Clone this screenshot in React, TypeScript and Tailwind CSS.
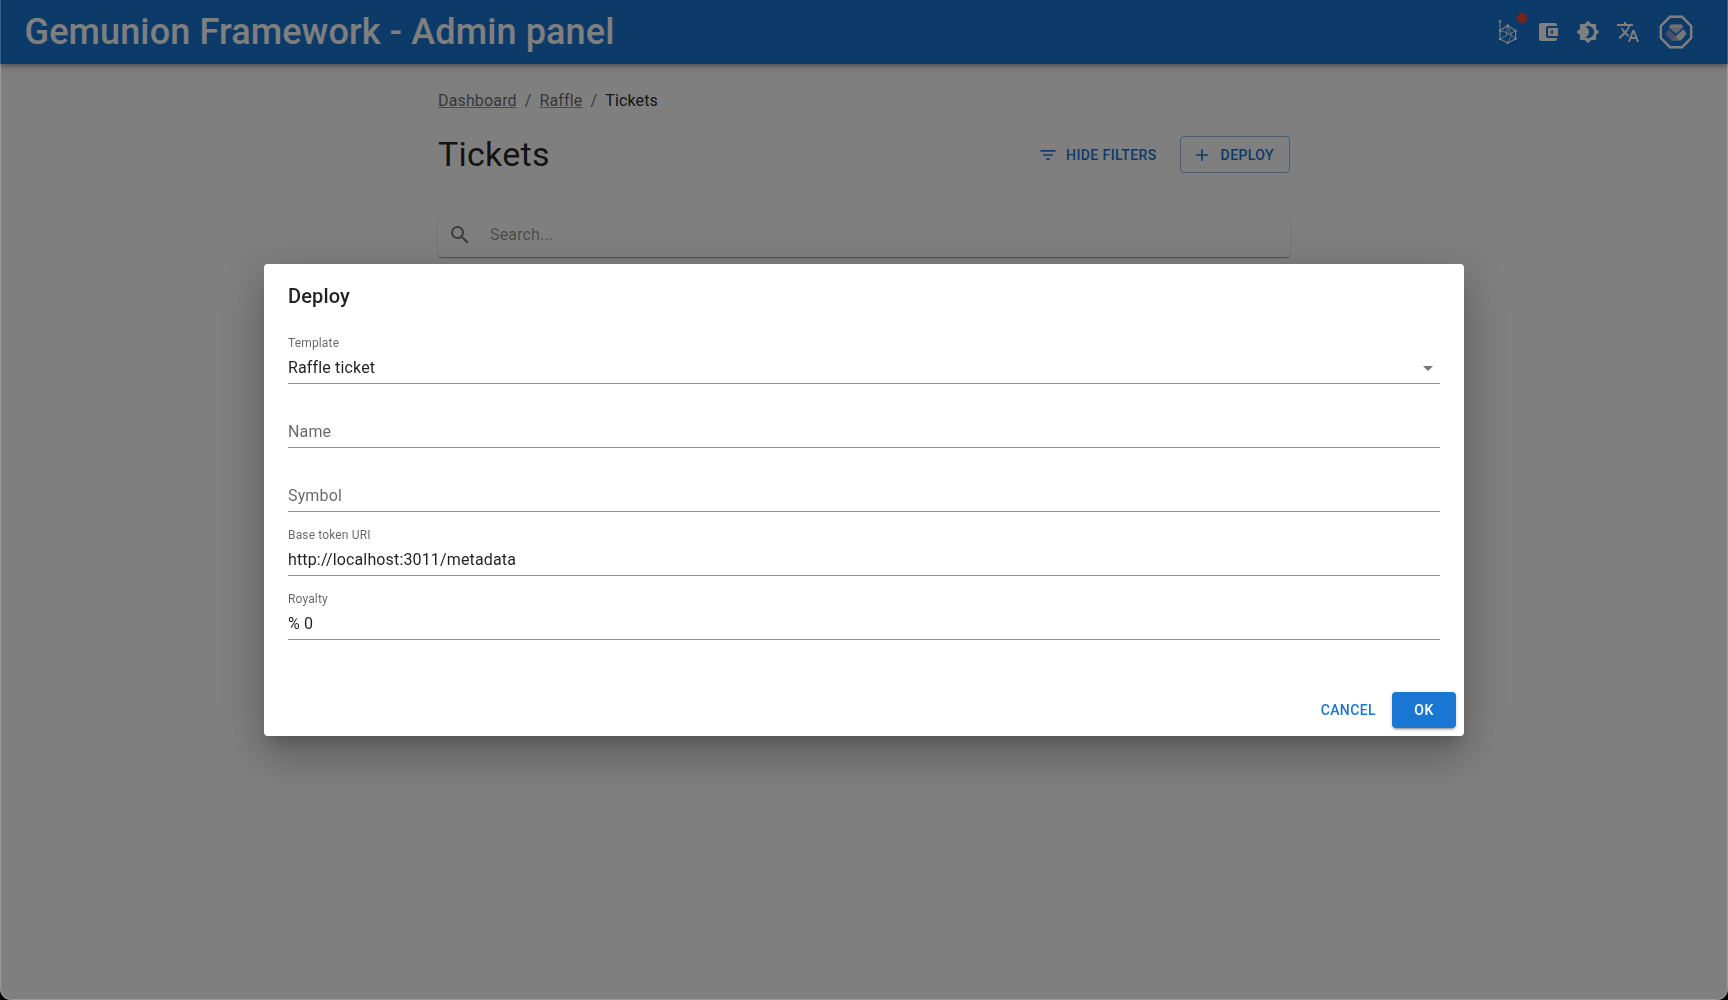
import React from "react";
import {
  MdAccountBalanceWallet,
  MdAdd,
  MdArrowDropDown,
  MdBrightness4,
  MdFilterList,
  MdSearch,
  MdTranslate,
} from "react-icons/md";

function NetworkIcon() {
  const nodes = [
    [4, 1.3],
    [4, 19],
    [4, 10.8],
    [11.7, 5.5],
    [19.6, 10.8],
    [19.6, 18.8],
    [11.7, 23],
  ];
  return (
    <svg width="24" height="24" viewBox="0 0 24 24" fill="none" stroke="currentColor" strokeWidth="1.1">
      <path d="M4 1.3V19l7.7 4 7.9-4.2v-8l-7.9-5.3L4 10.8" />
      <path d="M4 10.8l8.5 2.2 7.1 5.8M11.7 5.5l-1.4 10.2M4 19l6.3-3.3 9.3-4.9M11.7 5.5l3.8 9.6-3.8 7.9" strokeWidth=".8" />
      {nodes.map(([x, y]) => (
        <circle key={`${x}-${y}`} cx={x} cy={y} r="1.2" fill="currentColor" stroke="none" />
      ))}
    </svg>
  );
}

function GemLogo() {
  return (
    <svg width="34" height="34" viewBox="0 0 34 34">
      <path d="M11 1.8h12L32.2 11v12L23 32.2H11L1.8 23V11z" fill="none" stroke="#fff" strokeWidth="2.4" />
      <path d="M6.3 19l3.2-4.8L17 21v4.6h-5z" fill="#8d9fcf" />
      <path d="M27.6 18.8l-3.2-4.6L17 21l-2 1.9 2 2.7h5z" fill="#eeeeec" />
      <path d="M12 25.6l5-4.6 3 4.6z" fill="#b0bbdc" />
      <path d="M11.7 9.3h11l1.8 3.3L17 19.2l-7.5-6.6z" fill="#c3cdea" stroke="#1976d2" strokeWidth=".8" />
      <path d="M11.9 9.5h10.6l1.5 2.8H10.2z" fill="#e2e4ec" />
    </svg>
  );
}

function Header() {
  return (
    <header className="flex h-16 items-center justify-between bg-[#1976d2] px-6 text-white shadow-[0_2px_4px_-1px_rgba(0,0,0,0.2),0_4px_5px_rgba(0,0,0,0.14),0_1px_10px_rgba(0,0,0,0.12)]">
      <div className="pl-[0.5px] text-[36px] leading-[54px] font-medium tracking-[0.0035em]">Gemunion Framework - Admin panel</div>
      <div className="flex items-center">
        <button className="relative p-2">
          <NetworkIcon />
          <span className="absolute top-[1px] right-[1px] size-2.5 rounded-full bg-[#f44336]" />
        </button>
        <button className="p-2"><MdAccountBalanceWallet size={24} /></button>
        <button className="p-2"><MdBrightness4 size={24} /></button>
        <button className="p-2"><MdTranslate size={24} /></button>
        <button className="flex w-14 justify-center"><GemLogo /></button>
      </div>
    </header>
  );
}

function Field({ label, value, prefix, select }: { label: string; value?: string; prefix?: string; select?: boolean }) {
  return (
    <div className="mb-4 flex h-12 flex-col border-b border-[#949494] tracking-[0.00938em]">
      {value ? (
        <>
          <span className="h-[17px] text-xs leading-[15px] text-black/60">{label}</span>
          <div className="flex h-[30px] items-center justify-between">
            <span>{prefix}{value}</span>
            {select && <MdArrowDropDown size={24} className="text-black/54" />}
          </div>
        </>
      ) : (
        <span className="pt-5 leading-6 text-black/60">{label}</span>
      )}
    </div>
  );
}

function DeployDialog() {
  return (
    <div className="fixed inset-0 flex items-center justify-center bg-black/50">
      <div role="dialog" className="flex h-[472.5px] w-[1200px] flex-col rounded bg-white shadow-[0_11px_15px_-7px_rgba(0,0,0,0.2),0_24px_38px_3px_rgba(0,0,0,0.14),0_9px_46px_8px_rgba(0,0,0,0.12)]">
        <h2 className="px-6 py-4 text-xl leading-8 font-medium tracking-[0.0075em]">Deploy</h2>
        <div className="flex-1 px-6 pt-2">
          <Field label="Template" value="Raffle ticket" select />
          <Field label="Name" />
          <Field label="Symbol" />
          <Field label="Base token URI" value="http://localhost:3011/metadata" />
          <Field label="Royalty" value="0" prefix="% " />
        </div>
        <div className="flex items-center justify-end gap-2 p-2 text-sm leading-[24.5px] font-medium tracking-[0.02857em]">
          <button className="px-2 py-1.5 text-[#1976d2]">CANCEL</button>
          <button className="w-16 rounded bg-[#1976d2] py-1.5 text-white shadow-[0_3px_1px_-2px_rgba(0,0,0,0.2),0_2px_2px_rgba(0,0,0,0.14),0_1px_5px_rgba(0,0,0,0.12)]">OK</button>
        </div>
      </div>
    </div>
  );
}

export default function App() {
  return (
    <div className="h-[1000px] overflow-hidden bg-black font-['Roboto',sans-serif] text-base text-black/87">
      <div className="h-full overflow-hidden rounded-b-[11px] bg-white">
        <Header />
        <main className="mx-auto w-[852px] pt-[25px]">
          <nav className="flex h-6 tracking-[0.00938em] text-black/60">
            <a className="underline decoration-black/40">Dashboard</a>
            <span className="mx-2">/</span>
            <a className="underline decoration-black/40">Raffle</a>
            <span className="mx-2">/</span>
            <span className="text-black/87">Tickets</span>
          </nav>
          <div className="mt-5 flex items-center justify-between">
            <h1 className="text-[34px] leading-[42px] tracking-[0.00735em]">Tickets</h1>
            <div className="flex gap-[15px] pt-px text-sm leading-[24.5px] font-medium tracking-[0.02857em] text-[#1976d2]">
              <button className="flex items-center gap-2 px-2 pt-[6.5px] pb-[5.5px]"><MdFilterList size={20} className="-mt-px" />HIDE FILTERS</button>
              <button className="flex items-center gap-[9px] rounded border border-[#1976d2]/50 px-[15px] pt-[5.5px] pb-[4.5px]"><MdAdd size={20} className="-mt-px -ml-1" />DEPLOY</button>
            </div>
          </div>
          <div className="mt-[38px] flex h-11 items-center rounded shadow-[0_2px_1px_-1px_rgba(0,0,0,0.2),0_1px_1px_rgba(0,0,0,0.14),0_1px_3px_rgba(0,0,0,0.12)]">
            <MdSearch size={24} className="ml-2.5 text-black/54" />
            <span className="ml-[18px] tracking-[0.00938em] text-black/42">Search...</span>
          </div>
        </main>
      </div>
      <DeployDialog />
      <div className="pointer-events-none fixed inset-0 rounded-b-[11px] border-x border-b border-white/20" />
    </div>
  );
}
